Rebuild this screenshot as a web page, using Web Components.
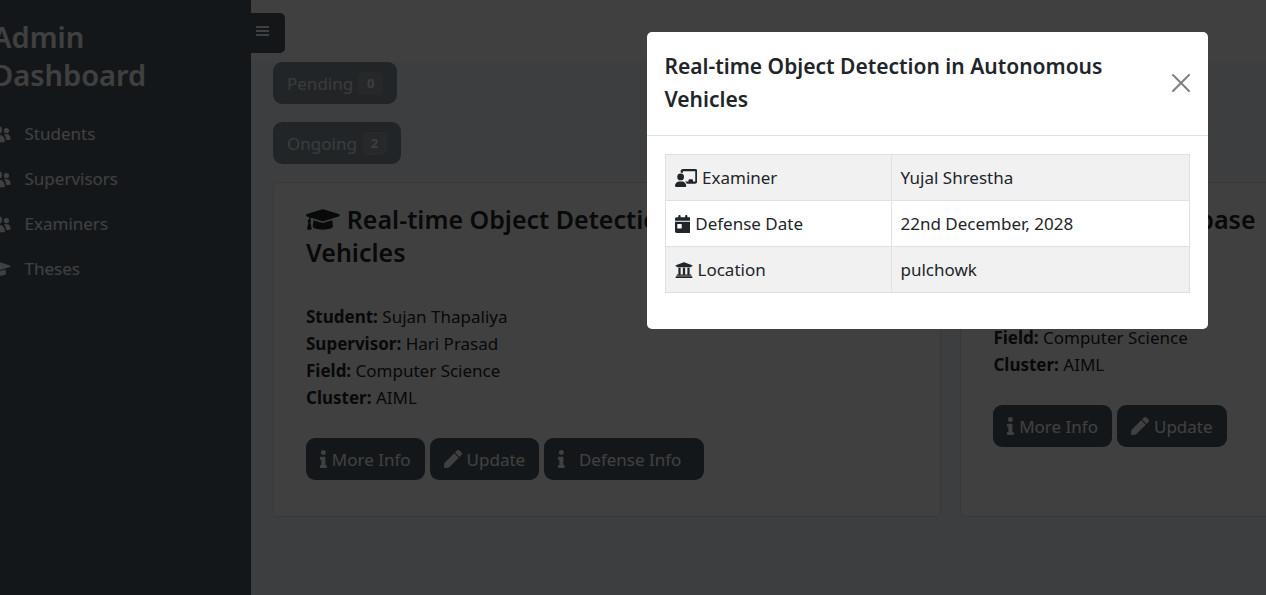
<!DOCTYPE html>
<html lang="en">
<head>
<meta charset="utf-8">
<meta name="viewport" content="width=device-width, initial-scale=1">
<title>Admin Dashboard</title>
<style>
  html, body { margin: 0; height: 100%; }
  body { overflow: hidden; font-family: "Noto Sans", "Open Sans", sans-serif; font-size: 17px; line-height: 27px; color: #212529; }
</style>
</head>
<body>
<admin-app>
  <side-bar slot="nav" heading="Admin Dashboard">
    <nav-item icon="users">Students</nav-item>
    <nav-item icon="users">Supervisors</nav-item>
    <nav-item icon="users">Examiners</nav-item>
    <nav-item icon="cap">Theses</nav-item>
  </side-bar>
  <status-button count="0">Pending</status-button>
  <status-button count="2">Ongoing</status-button>
  <card-grid>
    <thesis-card heading="Real-time Object Detection in Autonomous Vehicles" student="Sujan Thapaliya" supervisor="Hari Prasad" field="Computer Science" cluster="AIML">
      <action-button icon="info">More Info</action-button>
      <action-button icon="pen">Update</action-button>
      <action-button icon="info" wide>Defense Info</action-button>
    </thesis-card>
    <thesis-card heading="Scalable Database" student="Sujan Thapaliya" supervisor="Hari Prasad" field="Computer Science" cluster="AIML">
      <action-button icon="info">More Info</action-button>
      <action-button icon="pen">Update</action-button>
    </thesis-card>
  </card-grid>
  <defense-dialog slot="dialog" heading="Real-time Object Detection in Autonomous Vehicles" examiner="Yujal Shrestha" date="22nd December, 2028" location="pulchowk"></defense-dialog>
</admin-app>
<script>
const ICONS = {
  users: [640, "M285 28a114 114 0 1 1 0 228 114 114 0 1 1 0-228zM100 460c0-92 60-175 140-175h90c90 0 150 83 150 175 0 20-12 32-32 32H132c-20 0-32-12-32-32zM525 84a74 74 0 1 1 0 148 74 74 0 1 1 0-148zM452 262h90c60 0 98 52 98 130 0 24-12 38-34 38H520c-4-70-28-126-68-168z"],
  cap: [640, "M622.34 153.2L343.4 67.5c-15.2-4.67-31.6-4.67-46.79 0L17.66 153.2c-23.54 7.23-23.54 38.36 0 45.59l48.63 14.94c-10.67 13.19-17.23 29.28-17.88 46.9C38.78 266.15 32 276.11 32 288c0 10.78 5.68 19.85 13.86 25.65L20.33 428.53C18.11 438.52 25.71 448 35.94 448h56.11c10.24 0 17.84-9.48 15.62-19.47L82.14 313.65C90.32 307.85 96 298.78 96 288c0-11.57-6.47-21.25-15.66-26.87.76-15.02 8.44-28.3 20.69-36.72L296.6 284.5c9.06 2.78 26.44 6.25 46.79 0l278.95-85.7c23.55-7.24 23.55-38.36 0-45.6zM352.79 315.09c-28.53 8.76-52.84 3.92-65.59 0l-145.02-44.55L128 384c0 35.35 85.96 64 192 64s192-28.65 192-64l-14.18-113.47-145.03 44.56z"],
  info: [192, "M20 424.229h20V279.771H20c-11.046 0-20-8.954-20-20V212c0-11.046 8.954-20 20-20h112c11.046 0 20 8.954 20 20v212.229h20c11.046 0 20 8.954 20 20V492c0 11.046-8.954 20-20 20H20c-11.046 0-20-8.954-20-20v-47.771c0-11.046 8.954-20 20-20zM96 0C56.235 0 24 32.235 24 72s32.235 72 72 72 72-32.235 72-72S135.764 0 96 0z"],
  pen: [512, "M290.74 93.24l128.02 128.02-277.99 277.99-114.14 12.6C11.35 513.54-1.56 500.62.14 485.34l12.7-114.22 277.9-277.88zm207.2-19.06l-60.11-60.11c-18.75-18.75-49.16-18.75-67.91 0l-56.55 56.55 128.02 128.02 56.55-56.55c18.75-18.76 18.75-49.16 0-67.91z"],
  board: [640, "M160 64c0-35.3 28.7-64 64-64H576c35.3 0 64 28.7 64 64V352c0 35.3-28.7 64-64 64H336.8c-11.8-25.5-29.9-47.5-52.4-64H384V320c0-17.7 14.3-32 32-32h64c17.7 0 32 14.3 32 32v32h64V64L224 64v49.1C205.2 102.2 183.3 96 160 96V64zm0 64a96 96 0 1 1 0 192 96 96 0 1 1 0-192zM133.3 352h53.3C260.3 352 320 411.7 320 485.3c0 14.7-11.9 26.7-26.7 26.7H26.7C11.9 512 0 500.1 0 485.3C0 411.7 59.7 352 133.3 352z"],
  day: [448, "M128 0c17.7 0 32 14.3 32 32V64H288V32c0-17.7 14.3-32 32-32s32 14.3 32 32V64h48c26.5 0 48 21.5 48 48v48H0V112C0 85.5 21.5 64 48 64H96V32c0-17.7 14.3-32 32-32zM0 192H448V464c0 26.5-21.5 48-48 48H48c-26.5 0-48-21.5-48-48V192zm80 64c-8.8 0-16 7.2-16 16v96c0 8.8 7.2 16 16 16h96c8.8 0 16-7.2 16-16V272c0-8.8-7.2-16-16-16H80z"],
  columns: [512, "M496 128v16a8 8 0 0 1-8 8h-24v12c0 6.627-5.373 12-12 12H60c-6.627 0-12-5.373-12-12v-12H24a8 8 0 0 1-8-8v-16a8 8 0 0 1 4.941-7.392l232-88a7.996 7.996 0 0 1 6.118 0l232 88A8 8 0 0 1 496 128zm-24 304H40c-13.255 0-24 10.745-24 24v16a8 8 0 0 0 8 8h464a8 8 0 0 0 8-8v-16c0-13.255-10.745-24-24-24zM96 192v192H60c-6.627 0-12 5.373-12 12v20h416v-20c0-6.627-5.373-12-12-12h-36V192h-64v192h-64V192h-64v192h-64V192H96z"]
};
const icon = name => `<svg class="icon" viewBox="0 0 ${ICONS[name][0]} 512" aria-hidden="true"><path d="${ICONS[name][1]}"/></svg>`;
const BASE = `*{box-sizing:border-box} .icon{height:18px;fill:currentColor;flex:none;display:block}
  button{font:inherit;color:inherit;border:0;margin:0;cursor:pointer}`;

class View extends HTMLElement {
  connectedCallback() {
    if (this.shadowRoot) return;
    this.attachShadow({ mode: "open" }).innerHTML = `<style>${BASE}${this.styles()}</style>${this.markup()}`;
  }
  a(name) { return this.getAttribute(name) || ""; }
}

customElements.define("admin-app", class extends View {
  styles() { return `
    :host{display:block;height:100%;overflow:hidden}
    .shell{display:grid;grid-template-columns:281px 1fr;min-height:100%;margin:0 -618px 0 -30px;position:relative;background:#f4f7fc}
    main{display:flex;flex-direction:column;align-items:flex-start;gap:18px;padding:0 22px 78px}
    header{align-self:stretch;height:62px;margin:0 -22px -18px;padding-top:13px;background:#fff}
    header button{display:block;width:34px;height:40px;padding:0 5px 4px;background:#505e68;color:#fff;border-radius:0 5px 5px 0}
    header svg{display:block;width:13px;height:10px;fill:currentColor}
    .backdrop{position:absolute;inset:0;background:rgba(0,0,0,.75);padding-top:32px;display:flex;justify-content:center;align-items:flex-start}`; }
  markup() { return `<div class="shell"><slot name="nav"></slot>
    <main><header><button type="button" aria-label="Toggle menu"><svg viewBox="0 0 13 10"><path d="M0 0h13v2H0zM0 4h13v2H0zM0 8h13v2H0z"/></svg></button></header><slot></slot></main>
    <div class="backdrop"><slot name="dialog"></slot></div></div>`; }
});

customElements.define("side-bar", class extends View {
  styles() { return `
    :host{display:block;background:#505e68;color:#fff;padding:18px 22px}
    h1{margin:0 0 26px;font-size:29px;line-height:38px;font-weight:600}
    nav{display:flex;flex-direction:column;gap:18px}`; }
  markup() { return `<h1>${this.a("heading")}</h1><nav><slot></slot></nav>`; }
});

customElements.define("nav-item", class extends View {
  styles() { return `
    :host{display:block}
    a{display:flex;align-items:center;gap:14px;margin-left:-4px;color:#fff;text-decoration:none}`; }
  markup() { return `<a href="#">${icon(this.a("icon"))}<span><slot></slot></span></a>`; }
});

customElements.define("status-button", class extends View {
  styles() { return `
    :host{display:block}
    button{display:flex;align-items:center;gap:5px;height:42px;padding:0 14px;border-radius:9px;background:#87939b;color:#e8eaec}
    .badge{width:25px;border-radius:5px;background:#979ea3;color:#f4f5f6;font-size:13px;font-weight:700;line-height:23px;text-align:center}`; }
  markup() { return `<button type="button"><slot></slot><span class="badge">${this.a("count")}</span></button>`; }
});

customElements.define("card-grid", class extends View {
  styles() { return `:host{display:grid;grid-template-columns:43fr 58fr;gap:19px;align-self:stretch}`; }
  markup() { return `<slot></slot>`; }
});

customElements.define("thesis-card", class extends View {
  styles() { return `
    :host{display:block;background:#fff;border:1px solid #dddfe2;border-radius:5px;padding:20px 32px 36px}
    h2{margin:0 0 34px;font-size:25px;line-height:33px;font-weight:600;color:#212529}
    h2 .icon{display:inline-block;height:27px;vertical-align:-4px;margin-right:7px}
    p{margin:0 0 27px}
    .actions{display:flex;gap:5px}`; }
  markup() { return `<h2>${icon("cap")}${this.a("heading")}</h2>
    <p><b>Student:</b> ${this.a("student")}<br><b>Supervisor:</b> ${this.a("supervisor")}<br><b>Field:</b> ${this.a("field")}<br><b>Cluster:</b> ${this.a("cluster")}</p>
    <div class="actions"><slot></slot></div>`; }
});

customElements.define("action-button", class extends View {
  styles() { return `
    :host{display:block}
    button{display:flex;align-items:center;gap:5px;height:42px;padding:0 14px;border-radius:9px;background:#505e68;color:#fff}
    :host([wide]) button{gap:14px;padding-right:23px}`; }
  markup() { return `<button type="button">${icon(this.a("icon"))}<span><slot></slot></span></button>`; }
});

customElements.define("defense-dialog", class extends View {
  styles() { return `
    :host{display:block;width:561px;background:#fff;border-radius:5px;color:#212529}
    header{display:flex;align-items:center;justify-content:space-between;padding:18px 18px 19px;border-bottom:1px solid #dee2e6}
    h3{margin:0;font-size:21px;line-height:33px;font-weight:600}
    .close{display:block;padding:0;background:none;color:#808080}
    .close svg{display:block;width:18px;height:18px;stroke:currentColor;stroke-width:2;stroke-linecap:round}
    .body{padding:18px}
    table{width:100%;margin-bottom:18px;border-collapse:collapse;table-layout:fixed}
    th,td{height:46px;padding:9px;border:1px solid #dee2e6;font-weight:400;text-align:left}
    th{width:226px}
    tr:nth-child(odd){background:#f1f1f1}
    .label{display:flex;align-items:center;gap:5px}`; }
  markup() {
    const row = (i, label, value) => `<tr><th scope="row"><span class="label">${icon(i)}<span>${label}</span></span></th><td>${value}</td></tr>`;
    return `<section role="dialog" aria-labelledby="t"><header><h3 id="t">${this.a("heading")}</h3>
    <button class="close" type="button" aria-label="Close"><svg viewBox="0 0 18 18"><path d="M1 1L17 17M17 1L1 17"/></svg></button></header>
    <div class="body"><table><tbody>${row("board", "Examiner", this.a("examiner"))}${row("day", "Defense Date", this.a("date"))}${row("columns", "Location", this.a("location"))}</tbody></table></div></section>`; }
});
</script>
</body>
</html>
